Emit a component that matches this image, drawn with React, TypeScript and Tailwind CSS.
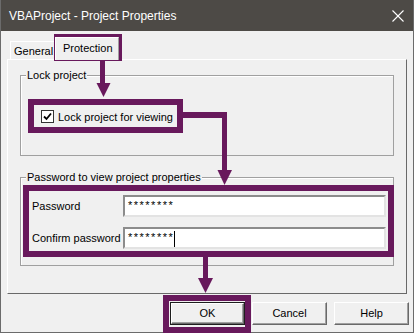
const PURPLE = '#68195c'

function Annotations() {
    return (
        <svg className="absolute inset-0 pointer-events-none" width={414} height={333} viewBox="0 0 414 333">
            <g fill="none" stroke={PURPLE} strokeWidth={6}>
                <rect x={57} y={37} width={62} height={21} />
                <rect x={31} y={102} width={149} height={28} />
                <rect x={26} y={188} width={365} height={66} />
                <rect x={166} y={298} width={82} height={32} />
            </g>
            <g fill={PURPLE}>
                <rect x={100} y={61} width={5} height={23} />
                <polygon points="96.5,83 110.5,83 103.5,97" />
                <rect x={183} y={112} width={44} height={6} />
                <rect x={222} y={112} width={5} height={59} />
                <polygon points="217.5,170 232,170 224.5,185" />
                <rect x={203} y={257} width={5} height={22} />
                <polygon points="198,278 213,278 205.5,293" />
            </g>
        </svg>
    )
}

function GroupBox({ label, className, children }: { label: string; className: string; children: React.ReactNode }) {
    return (
        <div className={`relative mx-[12px] border border-[#a0a0a0] shadow-[inset_1px_1px_0_#ffffff] ${className}`}>
            <span className="absolute left-[5px] -top-[8px] px-[1px] bg-[#f0f0f0] text-[11px] leading-[14px] text-black">{label}</span>
            {children}
        </div>
    )
}

function PasswordRow({ label, caret }: { label: string; caret?: boolean }) {
    return (
        <div className="flex items-center h-[22px]">
            <span className="w-[91px] text-[11px] leading-[14px] text-black">{label}</span>
            <div className="flex items-start w-[263px] h-[22px] bg-white border-2 border-t-[#8c8c8c] border-l-[#8c8c8c] border-b-[#e3e3e3] border-r-[#e3e3e3] pl-[3px] pt-[1px]">
                <span className="text-[11px] leading-[14px] tracking-[1.5px] text-black">********</span>
                {caret && <span className="w-px h-[16px] bg-black mt-[1px]" />}
            </div>
        </div>
    )
}

function Button({ label, isDefault }: { label: string; isDefault?: boolean }) {
    const face = (
        <div className="flex items-center justify-center w-full h-full bg-[#f0f0f0] border border-t-white border-l-white border-b-[#696969] border-r-[#696969] shadow-[inset_-1px_-1px_0_#a0a0a0] text-[11px] text-black">
            {label}
        </div>
    )
    if (isDefault) {
        return <div className="w-[75px] h-[23px] border border-[#1e1e1e]">{face}</div>
    }
    return <div className="w-[75px] h-[23px]">{face}</div>
}

export default function App() {
    return (
        <div className="relative w-[414px] h-[333px] overflow-hidden" style={{ fontFamily: "'Liberation Sans', Arial, sans-serif" }}>
            <div className="flex flex-col w-full h-full bg-[#f0f0f0] border-x border-b border-[#6b6b6b]">
                <div className="flex items-center justify-between h-[31px] bg-[#4d4a46] pl-[8px] pr-[9px] text-white text-[12px]">
                    <span>VBAProject - Project Properties</span>
                    <svg width={12} height={12} viewBox="0 0 12 12" stroke="#ffffff" strokeWidth={1.1}>
                        <line x1={0.5} y1={0.5} x2={11.5} y2={11.5} />
                        <line x1={11.5} y1={0.5} x2={0.5} y2={11.5} />
                    </svg>
                </div>

                <div className="flex items-end h-[28px] pl-[9px]">
                    <div className="w-[45px] h-[18px] border-t border-l border-white border-r border-r-[#a0a0a0] pl-[3px] pt-[2px] text-[11px] leading-[14px] text-black">
                        General
                    </div>
                    <div className="relative z-10 -mb-px w-[64px] h-[23px] bg-[#f0f0f0] border-t border-l border-white border-r border-r-[#a0a0a0] pl-[7px] pt-[3px] text-[11px] leading-[14px] text-black">
                        Protection
                    </div>
                </div>

                <div className="mx-[6px] h-[235px] border border-t-white border-l-white border-r-[#696969] border-b-[#696969]">
                    <GroupBox label="Lock project" className="mt-[15px] h-[81px] pl-[20px] pt-[34px]">
                        <div className="flex items-center gap-[4px] h-[13px]">
                            <div className="w-[13px] h-[13px] bg-white border border-[#333333] flex items-center justify-center">
                                <svg width={9} height={9} viewBox="0 0 9 9">
                                    <path d="M1 4.5 L3.5 7 L8 1.5" fill="none" stroke="#000000" strokeWidth={1.8} />
                                </svg>
                            </div>
                            <span className="text-[11px] leading-[14px] text-black">Lock project for viewing</span>
                        </div>
                    </GroupBox>

                    <GroupBox label="Password to view project properties" className="mt-[21px] h-[89px] pl-[11px] pt-[17px]">
                        <div className="flex flex-col gap-[10px]">
                            <PasswordRow label="Password" />
                            <PasswordRow label="Confirm password" caret />
                        </div>
                    </GroupBox>
                </div>

                <div className="flex justify-end gap-[7px] mt-[8px] pr-[4px]">
                    <Button label="OK" isDefault />
                    <Button label="Cancel" />
                    <Button label="Help" />
                </div>
            </div>
            <Annotations />
        </div>
    )
}
